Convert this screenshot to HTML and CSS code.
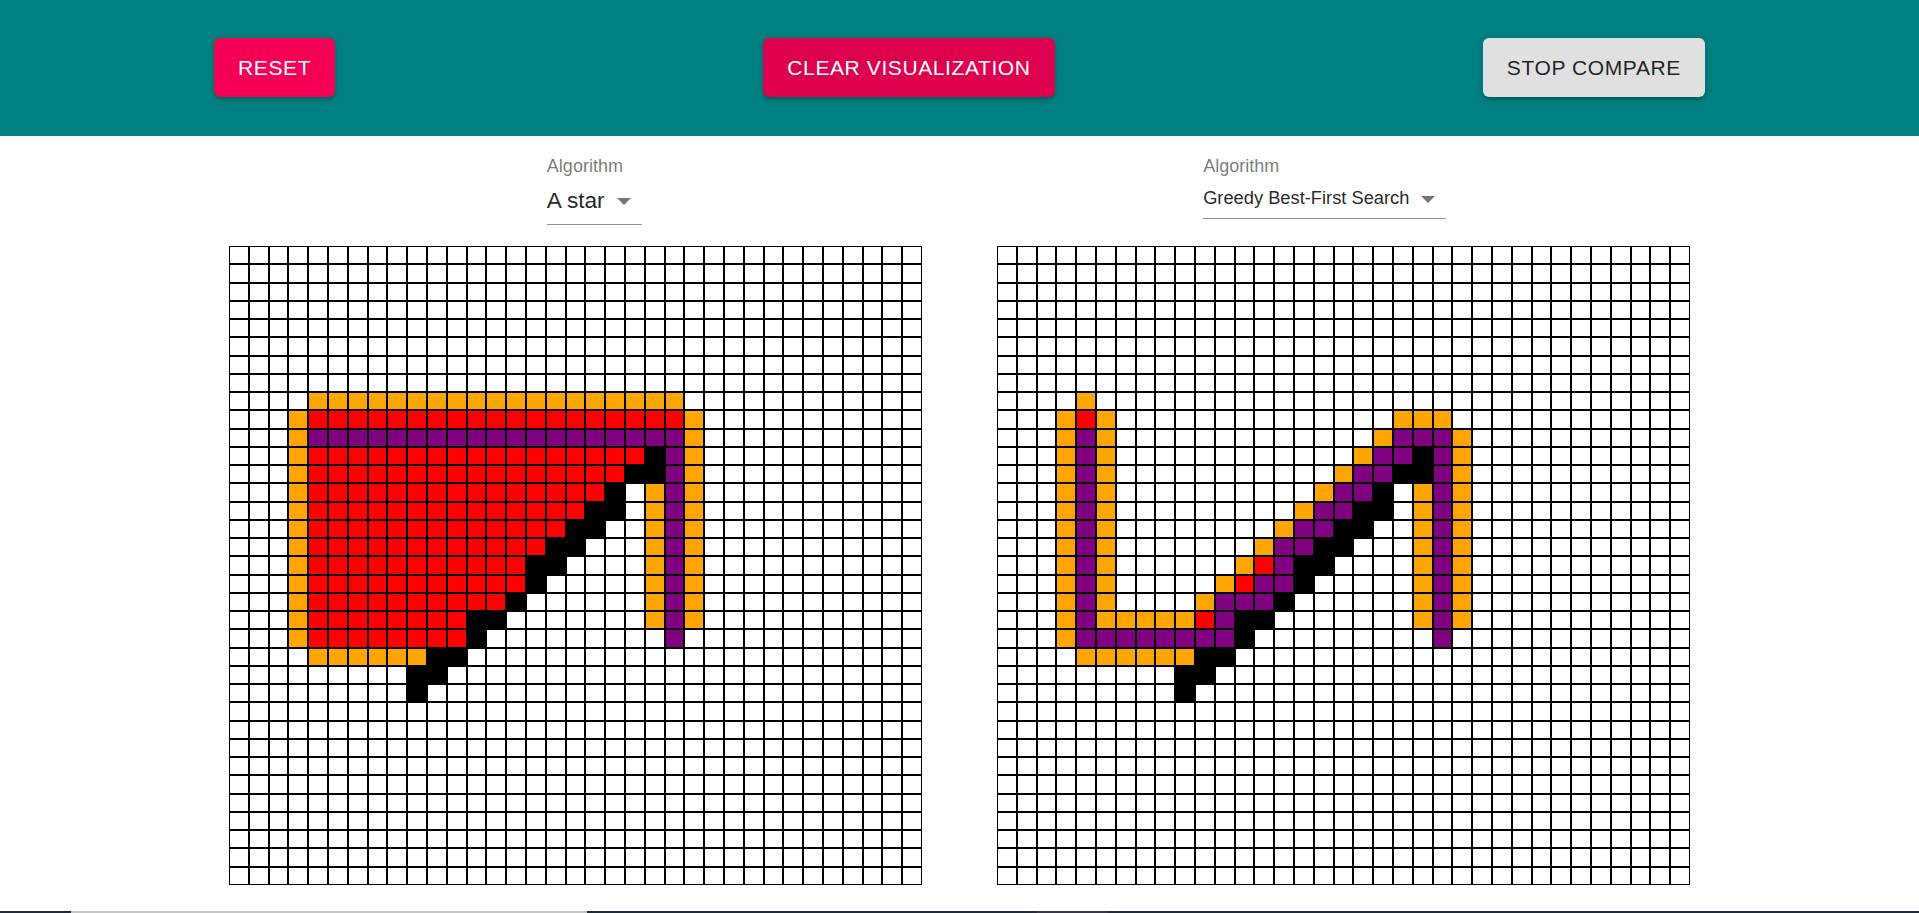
FILE: index.html
```html
<!DOCTYPE html>
<html lang="en">
<head>
<meta charset="utf-8">
<title>Pathfinding Visualizer</title>
<link rel="stylesheet" href="styles.css">
</head>
<body>
<header class="topbar">
  <button class="btn btn-reset">Reset</button>
  <button class="btn btn-clear">Clear Visualization</button>
  <button class="btn btn-compare">Stop Compare</button>
</header>
<main class="content">
  <div class="selectors">
    <div class="field">
      <label class="field-label">Algorithm</label>
      <div class="select select-lg"><span class="select-value">A star</span><span class="select-arrow"></span></div>
    </div>
    <div class="field">
      <label class="field-label">Algorithm</label>
      <div class="select select-sm"><span class="select-value">Greedy Best-First Search</span><span class="select-arrow"></span></div>
    </div>
  </div>
  <div class="boards">
    <div class="board" id="board-left"></div>
    <div class="board" id="board-right"></div>
  </div>
</main>
<div class="taskbar">
  <span class="tb-seg tb-dark1"></span>
  <span class="tb-seg tb-gray"></span>
  <span class="tb-seg tb-dark2"></span>
  <span class="tb-seg tb-purple"></span>
  <span class="tb-seg tb-dark3"></span>
</div>
<script src="script.js"></script>
</body>
</html>
```
FILE: styles.css
```css
html, body {
  margin: 0;
  padding: 0;
  background: #ffffff;
  font-family: "Liberation Sans", Arial, sans-serif;
}

.topbar {
  height: 136px;
  box-sizing: border-box;
  background: #008080;
  display: flex;
  justify-content: space-around;
  align-items: flex-start;
  padding-top: 38px;
}

.btn {
  height: 59px;
  padding: 0 24px;
  border: none;
  border-radius: 6px;
  font-family: "Liberation Sans", Arial, sans-serif;
  font-size: 21px;
  letter-spacing: 0.6px;
  text-transform: uppercase;
  cursor: pointer;
  box-shadow: 0 3px 1.5px -3px rgba(0,0,0,0.2), 0 3px 3px 0 rgba(0,0,0,0.14), 0 1.5px 7.5px 0 rgba(0,0,0,0.12);
}

.btn-reset {
  background: #f50057;
  color: #ffffff;
}

.btn-clear {
  background: #dc004e;
  color: #ffffff;
}

.btn-compare {
  background: #e0e0e0;
  color: rgba(0,0,0,0.87);
}

.content {
  width: 1461px;
  margin: 0 auto;
}

.selectors {
  height: 110px;
  box-sizing: border-box;
  padding-top: 20.5px;
  display: grid;
  grid-template-columns: 1fr 1fr;
  justify-items: center;
  align-items: start;
}

.field {
  display: flex;
  flex-direction: column;
  align-items: flex-start;
}

.field-label {
  font-size: 18px;
  line-height: 18px;
  color: rgba(0,0,0,0.54);
}

.select {
  display: flex;
  align-items: center;
  margin-top: 12px;
  padding-right: 11px;
  border-bottom: 1px solid rgba(0,0,0,0.42);
  color: rgba(0,0,0,0.87);
}

.select-lg {
  font-size: 22.6px;
  line-height: 27px;
  padding-bottom: 10.5px;
}

.select-sm {
  font-size: 18.3px;
  line-height: 22px;
  padding-bottom: 9px;
}

.select-arrow {
  width: 0;
  height: 0;
  margin-left: 12px;
  margin-top: 3px;
  border-left: 7px solid transparent;
  border-right: 7px solid transparent;
  border-top: 7px solid rgba(0,0,0,0.54);
}

.boards {
  display: flex;
  justify-content: space-between;
}

.board {
  width: 693px;
  height: 639px;
  display: grid;
  grid-template-columns: repeat(35, 1fr);
  grid-template-rows: repeat(35, 1fr);
}

.cell {
  border: 1px solid #000000;
  background: #ffffff;
  min-width: 0;
  min-height: 0;
}

.cell.c-o { background: #ffa500; }
.cell.c-r { background: #ff0000; }
.cell.c-p { background: #800080; }
.cell.c-b { background: #000000; }

.taskbar {
  position: fixed;
  left: 0;
  right: 0;
  bottom: 0;
  height: 2px;
  display: flex;
}

.tb-seg { display: block; height: 100%; }
.tb-dark1 { width: 71px; background: #1f2d3a; }
.tb-gray { width: 516px; background: #c6c6c6; }
.tb-dark2 { width: 450px; background: #1d2c3b; }
.tb-purple { width: 71px; background: #3b3347; }
.tb-dark3 { flex: 1; background: #1d2c3b; }
```
FILE: script.js
```js
(function () {
  var SIZE = 35;

  var leftRows = {
    8: "4.19o12.",
    9: "3.o19ro11.",
    10: "3.o19po11.",
    11: "3.o17rbpo11.",
    12: "3.o16r2bpo11.",
    13: "3.o15rb.opo11.",
    14: "3.o14r2b.opo11.",
    15: "3.o13r2b2.opo11.",
    16: "3.o12r2b3.opo11.",
    17: "3.o11r2b4.opo11.",
    18: "3.o11rb5.opo11.",
    19: "3.o10rb6.opo11.",
    20: "3.o8r2b7.opo11.",
    21: "3.o8rb9.p12.",
    22: "4.6o2b23.",
    23: "9.2b24.",
    24: "9.b25."
  };

  var rightRows = {
    8: "4.o30.",
    9: "3.oro14.3o12.",
    10: "3.opo13.o3po11.",
    11: "3.opo12.o2pbpo11.",
    12: "3.opo11.o2p2bpo11.",
    13: "3.opo10.o2pb.opo11.",
    14: "3.opo9.o2p2b.opo11.",
    15: "3.opo8.o2p2b2.opo11.",
    16: "3.opo7.o2p2b3.opo11.",
    17: "3.opo6.orp2b4.opo11.",
    18: "3.opo5.or2pb5.opo11.",
    19: "3.opo4.o3pb6.opo11.",
    20: "3.op5orp2b7.opo11.",
    21: "3.o8pb9.p12.",
    22: "4.6o2b23.",
    23: "9.2b24.",
    24: "9.b25."
  };

  function expand(spec) {
    var out = "";
    var re = /(\d*)(\D)/g;
    var m;
    while ((m = re.exec(spec)) !== null) {
      var n = m[1] ? parseInt(m[1], 10) : 1;
      for (var i = 0; i < n; i++) out += m[2];
    }
    while (out.length < SIZE) out += ".";
    return out.slice(0, SIZE);
  }

  function build(id, rows) {
    var el = document.getElementById(id);
    var frag = document.createDocumentFragment();
    for (var r = 0; r < SIZE; r++) {
      var line = rows[r] ? expand(rows[r]) : expand("");
      for (var c = 0; c < SIZE; c++) {
        var d = document.createElement("div");
        var ch = line.charAt(c);
        d.className = ch === "." ? "cell" : "cell c-" + ch;
        frag.appendChild(d);
      }
    }
    el.appendChild(frag);
  }

  build("board-left", leftRows);
  build("board-right", rightRows);
})();
```
